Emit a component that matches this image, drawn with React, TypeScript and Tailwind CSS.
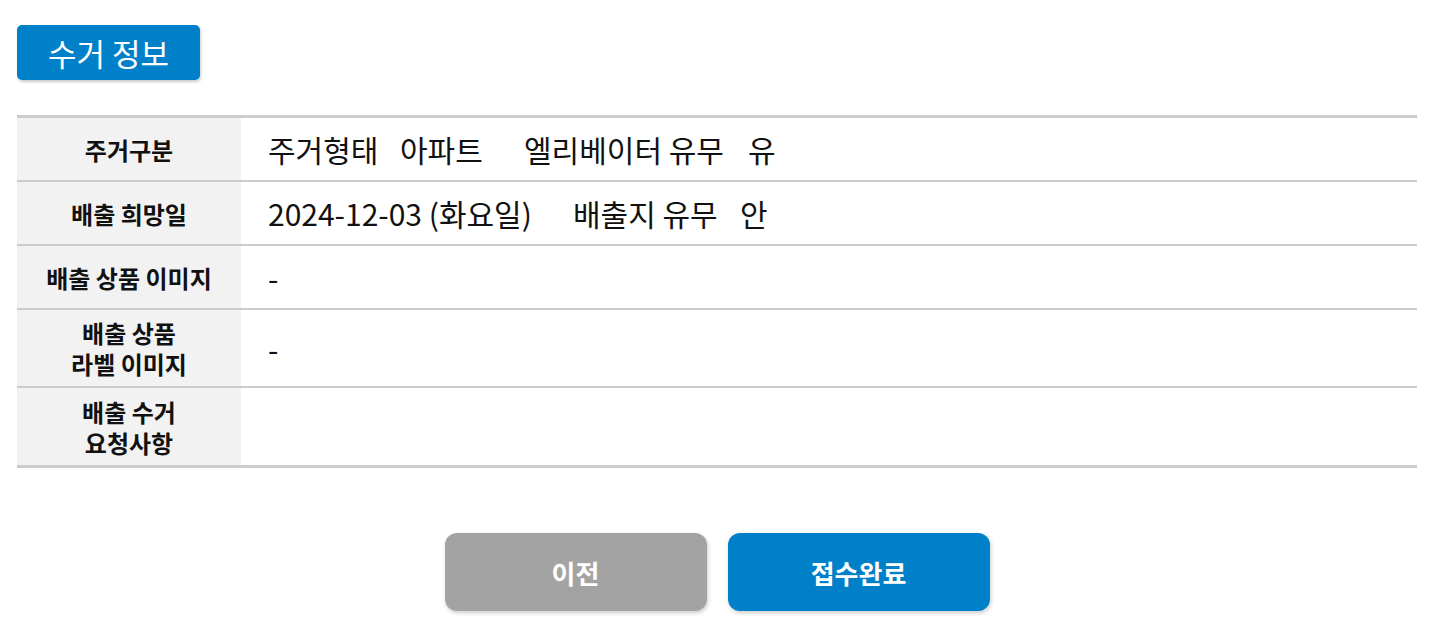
import React from "react";

const font = { fontFamily: '"Noto Sans CJK KR", "Noto Sans", sans-serif' };

function Row({
  label,
  children,
  h,
  first,
}: {
  label: React.ReactNode;
  children?: React.ReactNode;
  h: string;
  first?: boolean;
}) {
  return (
    <div className={`flex ${h} ${first ? "" : "border-t-2 border-[#cccccc]"}`}>
      <div className="w-[224px] shrink-0 bg-[#f2f2f2] flex flex-col items-center justify-center text-center text-[24px] font-bold leading-[31px] text-[#111]">
        {label}
      </div>
      <div className="flex-1 flex items-center pl-[27px] text-[30px] leading-[40px] text-[#111] whitespace-nowrap">
        {children}
      </div>
    </div>
  );
}

export default function App() {
  return (
    <div className="bg-white min-h-screen pt-[25px] pl-[17px]" style={font}>
      <div className="inline-flex items-center justify-center w-[183px] h-[55px] rounded-[5px] bg-[#0080c9] text-white text-[31px] font-normal leading-none shadow-[1px_2px_3px_rgba(0,0,0,0.2)]">
        수거 정보
      </div>

      <div className="w-[1400px] mt-[35px] border-t-[3px] border-b-[3px] border-[#cccccc]">
        <Row label="주거구분" h="h-[62px]" first>
          <span className="inline-block w-[132px]">주거형태</span>
          <span className="inline-block w-[124px]">아파트</span>
          <span className="inline-block w-[224px]">엘리베이터 유무</span>
          <span>유</span>
        </Row>
        <Row label="배출 희망일" h="h-[64px]">
          <span className="inline-block w-[305px]">2024-12-03 (화요일)</span>
          <span className="inline-block w-[167px]">배출지 유무</span>
          <span>안</span>
        </Row>
        <Row label="배출 상품 이미지" h="h-[64px]">
          <span>-</span>
        </Row>
        <Row label={<><span>배출 상품</span><span>라벨 이미지</span></>} h="h-[78px]">
          <span>-</span>
        </Row>
        <Row label={<><span>배출 수거</span><span>요청사항</span></>} h="h-[79px]" />
      </div>

      <div className="w-[1400px] flex justify-center gap-[21px] mt-[65px]">
        <button className="w-[262px] h-[78px] rounded-[12px] bg-[#a3a3a3] text-white text-[26px] font-bold shadow-[1px_2px_4px_rgba(0,0,0,0.2)]">
          이전
        </button>
        <button className="w-[262px] h-[78px] rounded-[12px] bg-[#0080c9] text-white text-[26px] font-bold shadow-[1px_2px_4px_rgba(0,0,0,0.2)]">
          접수완료
        </button>
      </div>
    </div>
  );
}
